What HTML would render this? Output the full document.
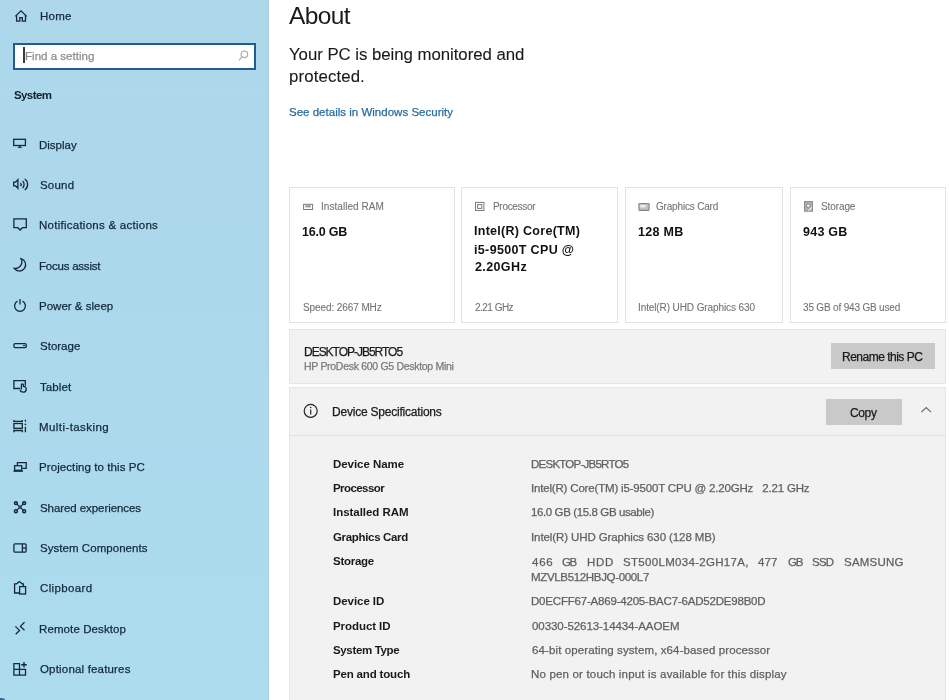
<!DOCTYPE html>
<html><head><meta charset="utf-8"><style>
html,body{margin:0;padding:0;width:949px;height:700px;overflow:hidden;background:#fff;font-family:"Liberation Sans",sans-serif}
.t{position:absolute;white-space:pre;will-change:transform;-webkit-text-stroke:0.25px currentColor}
.t[style*='font-weight:700']{-webkit-text-stroke:0}
.b{position:absolute;box-sizing:border-box}
svg{position:absolute;overflow:visible}
</style></head><body>
<div class=b style="left:0;top:0;width:269px;height:700px;background:linear-gradient(180deg,#aed7ea 0%,#acd8ec 40%,#acdcee 100%)"></div>
<div class=b style="left:268px;top:0;width:1px;height:700px;background:#afcedc"></div>
<div class=b style="left:13px;top:43px;width:243px;height:27px;background:#fff;border:2px solid #225d8e"></div>
<div class=b style="left:23.3px;top:47px;width:1.4px;height:15.8px;background:#3a3a3a"></div>
<div class=b style="left:289px;top:187px;width:166px;height:136px;border:1.5px solid #e3e3e3"></div>
<div class=b style="left:460.5px;top:187px;width:157.5px;height:136px;border:1.5px solid #e3e3e3"></div>
<div class=b style="left:624.5px;top:187px;width:158.5px;height:136px;border:1.5px solid #e3e3e3"></div>
<div class=b style="left:789.5px;top:187px;width:156.5px;height:136px;border:1.5px solid #e3e3e3"></div>
<div class=b style="left:289px;top:329px;width:657px;height:55px;background:#f2f2f2;border:1.5px solid #e6e6e6"></div>
<div class=b style="left:831px;top:343px;width:104px;height:26px;background:#c9c9c9"></div>
<div class=b style="left:289px;top:387px;width:657px;height:313px;background:#f2f2f2;border:1.5px solid #e6e6e6;border-bottom:none"></div>
<div class=b style="left:289px;top:434.5px;width:657px;height:1.5px;background:#e0e0e0"></div>
<div class=b style="left:826px;top:399px;width:76px;height:26px;background:#c9c9c9"></div>
<svg style="left:0;top:0" width="949" height="700" viewBox="0 0 949 700" fill="none" stroke-linejoin="miter">
<g stroke="#142838" stroke-width="1.3">
<!-- home -->
<path d="M15.3,16.4 L21,10.9 L26.7,16.4"/>
<path d="M16.6,15.2 V21.2 H19.8 V17.6 H22.3 V21.2 H25.5 V15.2"/>
<!-- display -->
<rect x="13.7" y="139.3" width="11.7" height="6.2"/>
<path d="M18,147.6 L19.8,145.8 L21.6,147.6 Z" fill="#142838" stroke-width="0.6"/>
<!-- sound -->
<path d="M13.7,182.2 H15.6 L17.9,179.7 V188.3 L15.6,185.9 H13.7 Z"/>
<path d="M20.5,182.9 A2.4,2.4 0 0 1 20.5,186.1"/>
<path d="M22.6,181.1 A4.6,4.6 0 0 1 22.6,187.9"/>
<path d="M24.8,179 A6.8,6.8 0 0 1 24.8,190"/>
<!-- notifications -->
<path d="M13.9,218.9 H26.3 V227.7 H22.4 L20.1,230 L17.8,227.7 H13.9 Z"/>
<!-- focus assist -->
<path d="M21,258.7 A6.3,6.3 0 1 1 14.2,268.4 A6.6,6.6 0 0 0 21,258.7 Z"/>
<!-- power -->
<path d="M17.5,301.2 A5.4,5.4 0 1 0 22.5,301.2"/>
<path d="M20,299 V304.4"/>
<!-- storage -->
<rect x="13.9" y="343.6" width="12.4" height="4" rx="1.3"/>
<path d="M23,345.6 H25" stroke-width="1"/>
<!-- tablet -->
<path d="M20.2,388.5 H13.9 V380.7 H25.3 V385.8"/>
<path d="M21.4,389.6 V384.9 A1,1 0 0 1 23.4,384.9 V386.4 C25.6,386.4 26.4,388 26.2,389.6 C26,391.6 24.6,392.1 23.3,392.1 C21.8,392.1 20.4,391.5 20.1,389.9"/>
<!-- multitasking -->
<path d="M13.9,420 V421.3 H22.3 V420"/>
<rect x="13.9" y="423.5" width="8.4" height="4.8"/>
<path d="M13.9,432.3 V430.5 H22.3 V432.3"/>
<path d="M25.4,419.8 V421.8 M25.4,426.8 V432.3"/>
<circle cx="25.4" cy="424.3" r="0.9" fill="#142838" stroke="none"/>
<!-- projecting -->
<path d="M17.4,465.7 V462.6 H26.2 V468.3 H22.3"/>
<rect x="14.6" y="465.7" width="7.1" height="4.6"/>
<path d="M13.4,471.2 H23"/>
<!-- shared -->
<g stroke-width="1.5">
<circle cx="15.9" cy="503.1" r="1.45"/>
<circle cx="24.2" cy="503.1" r="1.45"/>
<circle cx="15.9" cy="511.3" r="1.45"/>
<circle cx="24.2" cy="511.3" r="1.45"/>
</g>
<path d="M17,504.2 L19,506.2 M23.1,504.2 L21.1,506.2 M17,510.2 L19,508.2 M23.1,510.2 L21.1,508.2" stroke-width="1.2"/>
<rect x="19" y="506.2" width="2.1" height="2" stroke-width="1.1"/>
<!-- system components -->
<rect x="13.9" y="543.9" width="12.2" height="8.2" rx="1.2"/>
<path d="M22.4,543.9 V552.1 M22.4,548.1 H26.1"/>
<!-- clipboard -->
<path d="M19.4,593 H14.6 V583.8 H16.6 L19.4,581.6 L22.2,583.8 H23.4 V586.4"/>
<rect x="19.6" y="586.6" width="6" height="7.4"/>
<!-- remote desktop -->
<path d="M15.4,626.4 L19.5,630.4 L15.7,634.2"/>
<path d="M24.5,622.2 L20.4,626.4 L24.5,630.3"/>
<!-- optional features -->
<path d="M13.9,669.4 H25.5 V675.2 H13.9 V663.7 H19.5 V675.2"/>
<path d="M24,662 V667.6 M21.2,664.8 H26.8" stroke-width="1.4"/>
</g>
<!-- search icon -->
<g stroke="#a8a8a8" stroke-width="1.1">
<circle cx="244.4" cy="54.3" r="3.3"/>
<path d="M242,56.8 L238.9,60.4"/>
</g>
<!-- card icons -->
<g stroke="#7a7a7a" stroke-width="1">
<rect x="303.6" y="204.3" width="9" height="5.2"/>
<rect x="305.3" y="205.2" width="5.6" height="2.2" fill="#9a9a9a" stroke="none"/>
<rect x="475.5" y="202.4" width="8.4" height="8.1"/>
<rect x="477.6" y="204.6" width="4.2" height="3.8"/>
<rect x="638.9" y="203.5" width="10.2" height="6.9" rx="0.8" fill="#c4c4c4" stroke="#858585" stroke-width="1.1"/>
<rect x="640.3" y="205.2" width="5.2" height="2.2" fill="#f0f0f0" stroke="none"/>
<rect x="804.5" y="201.6" width="8" height="9.6" fill="#b0b0b0" stroke="#8a8a8a"/>
<circle cx="808.3" cy="205.8" r="2" fill="#e8e8e8" stroke="#888"/>
<path d="M808.5,210.8 L812,207.4" stroke="#f4f4f4" stroke-width="1.1"/>
</g>
<!-- info -->
<g stroke="#262626" stroke-width="1.2">
<circle cx="310.7" cy="410.9" r="6.5"/>
<path d="M310.7,409.4 V414.6"/>
</g>
<circle cx="310.7" cy="407.5" r="0.75" fill="#262626"/>
<!-- chevron -->
<path d="M921.4,412.1 L926.2,407.5 L931,412.1" stroke="#6a6a6a" stroke-width="1.2"/>
<ellipse cx="1.5" cy="700" rx="3.5" ry="2" fill="#3d6a8a"/>
</svg>

<div class=t style="left:40.10px;top:11.22px;font-size:11.5px;line-height:11.5px;font-weight:400;color:#14283a;letter-spacing:0.250px">Home</div>
<div class=t style="left:24.60px;top:50.73px;font-size:11.5px;line-height:11.5px;font-weight:400;color:#8c8c8c;letter-spacing:0.027px">Find a setting</div>
<div class=t style="left:13.75px;top:89.72px;font-size:11.5px;line-height:11.5px;font-weight:700;color:#10202c;letter-spacing:-0.600px">System</div>
<div class=t style="left:39.00px;top:139.53px;font-size:11.5px;line-height:11.5px;font-weight:400;color:#14283a;letter-spacing:-0.008px">Display</div>
<div class=t style="left:39.50px;top:179.88px;font-size:11.5px;line-height:11.5px;font-weight:400;color:#14283a;letter-spacing:0.200px">Sound</div>
<div class=t style="left:39.00px;top:220.22px;font-size:11.5px;line-height:11.5px;font-weight:400;color:#14283a;letter-spacing:0.257px">Notifications &amp; actions</div>
<div class=t style="left:39.00px;top:260.58px;font-size:11.5px;line-height:11.5px;font-weight:400;color:#14283a;letter-spacing:-0.223px">Focus assist</div>
<div class=t style="left:39.00px;top:300.93px;font-size:11.5px;line-height:11.5px;font-weight:400;color:#14283a;letter-spacing:0.004px">Power &amp; sleep</div>
<div class=t style="left:39.50px;top:341.28px;font-size:11.5px;line-height:11.5px;font-weight:400;color:#14283a;letter-spacing:0.008px">Storage</div>
<div class=t style="left:39.75px;top:381.63px;font-size:11.5px;line-height:11.5px;font-weight:400;color:#14283a;letter-spacing:0.100px">Tablet</div>
<div class=t style="left:39.00px;top:421.98px;font-size:11.5px;line-height:11.5px;font-weight:400;color:#14283a;letter-spacing:0.421px">Multi-tasking</div>
<div class=t style="left:39.00px;top:462.33px;font-size:11.5px;line-height:11.5px;font-weight:400;color:#14283a;letter-spacing:0.087px">Projecting to this PC</div>
<div class=t style="left:39.50px;top:502.68px;font-size:11.5px;line-height:11.5px;font-weight:400;color:#14283a;letter-spacing:-0.071px">Shared experiences</div>
<div class=t style="left:39.50px;top:543.02px;font-size:11.5px;line-height:11.5px;font-weight:400;color:#14283a;letter-spacing:0.044px">System Components</div>
<div class=t style="left:39.50px;top:583.38px;font-size:11.5px;line-height:11.5px;font-weight:400;color:#14283a;letter-spacing:0.350px">Clipboard</div>
<div class=t style="left:39.00px;top:623.73px;font-size:11.5px;line-height:11.5px;font-weight:400;color:#14283a;letter-spacing:0.104px">Remote Desktop</div>
<div class=t style="left:39.50px;top:664.08px;font-size:11.5px;line-height:11.5px;font-weight:400;color:#14283a;letter-spacing:0.178px">Optional features</div>
<div class=t style="left:289.40px;top:3.78px;font-size:24.5px;line-height:24.5px;font-weight:400;color:#1a1a1a;letter-spacing:-0.637px;-webkit-text-stroke:0px currentColor">About</div>
<div class=t style="left:289.10px;top:46.52px;font-size:16.8px;line-height:16.8px;font-weight:400;color:#1a1a1a;letter-spacing:-0.034px;-webkit-text-stroke:0.1px currentColor">Your PC is being monitored and</div>
<div class=t style="left:288.60px;top:69.22px;font-size:16.8px;line-height:16.8px;font-weight:400;color:#1a1a1a;letter-spacing:0.128px;-webkit-text-stroke:0.1px currentColor">protected.</div>
<div class=t style="left:289.30px;top:107.02px;font-size:11.5px;line-height:11.5px;font-weight:400;color:#2a6c9e;letter-spacing:0.013px">See details in Windows Security</div>
<div class=t style="left:320.60px;top:202.40px;font-size:10px;line-height:10px;font-weight:400;color:#747474;letter-spacing:0.042px;-webkit-text-stroke:0.1px currentColor">Installed RAM</div>
<div class=t style="left:302.25px;top:225.97px;font-size:12.5px;line-height:12.5px;font-weight:700;color:#111;letter-spacing:-0.208px">16.0 GB</div>
<div class=t style="left:302.50px;top:302.80px;font-size:10px;line-height:10px;font-weight:400;color:#747474;letter-spacing:-0.093px;-webkit-text-stroke:0.1px currentColor">Speed: 2667 MHz</div>
<div class=t style="left:492.85px;top:202.40px;font-size:10px;line-height:10px;font-weight:400;color:#747474;letter-spacing:-0.306px;-webkit-text-stroke:0.1px currentColor">Processor</div>
<div class=t style="left:474.25px;top:225.38px;font-size:12.5px;line-height:12.5px;font-weight:700;color:#111;letter-spacing:0.281px">Intel(R) Core(TM)</div>
<div class=t style="left:474.25px;top:243.68px;font-size:12.5px;line-height:12.5px;font-weight:700;color:#111;letter-spacing:0.346px">i5-9500T CPU @</div>
<div class=t style="left:474.50px;top:261.27px;font-size:12.5px;line-height:12.5px;font-weight:700;color:#111;letter-spacing:0.383px">2.20GHz</div>
<div class=t style="left:474.50px;top:302.80px;font-size:10px;line-height:10px;font-weight:400;color:#747474;letter-spacing:-0.521px;-webkit-text-stroke:0.1px currentColor">2.21 GHz</div>
<div class=t style="left:656.20px;top:202.40px;font-size:10px;line-height:10px;font-weight:400;color:#747474;letter-spacing:-0.183px;-webkit-text-stroke:0.1px currentColor">Graphics Card</div>
<div class=t style="left:637.85px;top:225.97px;font-size:12.5px;line-height:12.5px;font-weight:700;color:#111;letter-spacing:0.320px">128 MB</div>
<div class=t style="left:637.60px;top:302.80px;font-size:10px;line-height:10px;font-weight:400;color:#747474;letter-spacing:-0.106px;-webkit-text-stroke:0.1px currentColor">Intel(R) UHD Graphics 630</div>
<div class=t style="left:821.10px;top:202.40px;font-size:10px;line-height:10px;font-weight:400;color:#747474;letter-spacing:-0.100px;-webkit-text-stroke:0.1px currentColor">Storage</div>
<div class=t style="left:803.40px;top:225.97px;font-size:12.5px;line-height:12.5px;font-weight:700;color:#111;letter-spacing:0.260px">943 GB</div>
<div class=t style="left:803.40px;top:302.80px;font-size:10px;line-height:10px;font-weight:400;color:#747474;letter-spacing:-0.179px;-webkit-text-stroke:0.1px currentColor">35 GB of 943 GB used</div>
<div class=t style="left:303.70px;top:345.70px;font-size:12px;line-height:12px;font-weight:400;color:#1a1a1a;letter-spacing:-1.021px">DESKTOP-JB5RTO5</div>
<div class=t style="left:303.95px;top:361.18px;font-size:10.5px;line-height:10.5px;font-weight:400;color:#7a7a7a;letter-spacing:-0.300px">HP ProDesk 600 G5 Desktop Mini</div>
<div class=t style="left:841.80px;top:351.00px;font-size:12px;line-height:12px;font-weight:400;color:#1a1a1a;letter-spacing:-0.500px">Rename this PC</div>
<div class=t style="left:331.80px;top:406.40px;font-size:12px;line-height:12px;font-weight:400;color:#1a1a1a;letter-spacing:-0.212px">Device Specifications</div>
<div class=t style="left:850.10px;top:406.80px;font-size:12px;line-height:12px;font-weight:400;color:#1a1a1a;letter-spacing:-0.367px">Copy</div>
<div class=t style="left:332.85px;top:458.62px;font-size:11.5px;line-height:11.5px;font-weight:700;color:#1a1a1a;letter-spacing:-0.050px">Device Name</div>
<div class=t style="left:332.85px;top:482.93px;font-size:11.5px;line-height:11.5px;font-weight:700;color:#1a1a1a;letter-spacing:-0.569px">Processor</div>
<div class=t style="left:332.85px;top:507.23px;font-size:11.5px;line-height:11.5px;font-weight:700;color:#1a1a1a;letter-spacing:-0.042px">Installed RAM</div>
<div class=t style="left:333.10px;top:531.62px;font-size:11.5px;line-height:11.5px;font-weight:700;color:#1a1a1a;letter-spacing:-0.333px">Graphics Card</div>
<div class=t style="left:333.35px;top:556.12px;font-size:11.5px;line-height:11.5px;font-weight:700;color:#1a1a1a;letter-spacing:-0.258px">Storage</div>
<div class=t style="left:332.85px;top:596.23px;font-size:11.5px;line-height:11.5px;font-weight:700;color:#1a1a1a;letter-spacing:-0.062px">Device ID</div>
<div class=t style="left:332.85px;top:620.52px;font-size:11.5px;line-height:11.5px;font-weight:700;color:#1a1a1a;letter-spacing:-0.067px">Product ID</div>
<div class=t style="left:333.35px;top:645.43px;font-size:11.5px;line-height:11.5px;font-weight:700;color:#1a1a1a;letter-spacing:-0.350px">System Type</div>
<div class=t style="left:332.85px;top:669.33px;font-size:11.5px;line-height:11.5px;font-weight:700;color:#1a1a1a;letter-spacing:-0.171px">Pen and touch</div>
<div class=t style="left:531.10px;top:458.62px;font-size:11.5px;line-height:11.5px;font-weight:400;color:#5f5f5f;letter-spacing:-0.754px">DESKTOP-JB5RTO5</div>
<div class=t style="left:531.10px;top:483.12px;font-size:11.5px;line-height:11.5px;font-weight:400;color:#5f5f5f;letter-spacing:-0.180px">Intel(R) Core(TM) i5-9500T CPU @ 2.20GHz   2.21 GHz</div>
<div class=t style="left:531.35px;top:507.23px;font-size:11.5px;line-height:11.5px;font-weight:400;color:#5f5f5f;letter-spacing:-0.391px">16.0 GB (15.8 GB usable)</div>
<div class=t style="left:531.10px;top:531.62px;font-size:11.5px;line-height:11.5px;font-weight:400;color:#5f5f5f;letter-spacing:-0.098px">Intel(R) UHD Graphics 630 (128 MB)</div>
<div class=t style="left:531.10px;top:572.33px;font-size:11.5px;line-height:11.5px;font-weight:400;color:#5f5f5f;letter-spacing:-0.335px">MZVLB512HBJQ-000L7</div>
<div class=t style="left:531.10px;top:596.33px;font-size:11.5px;line-height:11.5px;font-weight:400;color:#5f5f5f;letter-spacing:-0.200px">D0ECFF67-A869-4205-BAC7-6AD52DE98B0D</div>
<div class=t style="left:531.60px;top:620.52px;font-size:11.5px;line-height:11.5px;font-weight:400;color:#5f5f5f;letter-spacing:-0.068px">00330-52613-14434-AAOEM</div>
<div class=t style="left:531.60px;top:645.23px;font-size:11.5px;line-height:11.5px;font-weight:400;color:#5f5f5f;letter-spacing:0.113px">64-bit operating system, x64-based processor</div>
<div class=t style="left:531.10px;top:669.33px;font-size:11.5px;line-height:11.5px;font-weight:400;color:#5f5f5f;letter-spacing:0.177px">No pen or touch input is available for this display</div>
<div class=t style="left:531.75px;top:556.62px;font-size:11.5px;line-height:11.5px;font-weight:400;color:#5f5f5f;letter-spacing:0.750px">466</div>
<div class=t style="left:562.00px;top:556.62px;font-size:11.5px;line-height:11.5px;font-weight:400;color:#5f5f5f;letter-spacing:-1.400px">GB</div>
<div class=t style="left:586.60px;top:556.62px;font-size:11.5px;line-height:11.5px;font-weight:400;color:#5f5f5f;letter-spacing:0.700px">HDD</div>
<div class=t style="left:622.50px;top:556.62px;font-size:11.5px;line-height:11.5px;font-weight:400;color:#5f5f5f;letter-spacing:0.309px">ST500LM034-2GH17A,</div>
<div class=t style="left:757.85px;top:556.62px;font-size:11.5px;line-height:11.5px;font-weight:400;color:#5f5f5f;letter-spacing:0.150px">477</div>
<div class=t style="left:787.50px;top:556.62px;font-size:11.5px;line-height:11.5px;font-weight:400;color:#5f5f5f;letter-spacing:-1.100px">GB</div>
<div class=t style="left:812.30px;top:556.62px;font-size:11.5px;line-height:11.5px;font-weight:400;color:#5f5f5f;letter-spacing:-0.750px">SSD</div>
<div class=t style="left:844.40px;top:556.62px;font-size:11.5px;line-height:11.5px;font-weight:400;color:#5f5f5f;letter-spacing:0.225px">SAMSUNG</div>
</body></html>
